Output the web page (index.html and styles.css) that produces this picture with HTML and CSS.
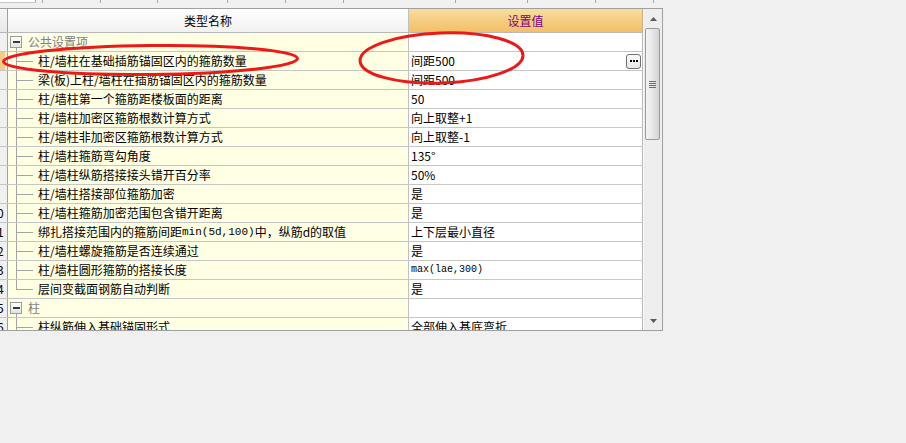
FILE: index.html
```html
<!DOCTYPE html>
<html lang="zh-CN">
<head>
<meta charset="utf-8">
<title>设置</title>
<link rel="stylesheet" href="styles.css">
</head>
<body>
<div class="ruler">
  <span class="tick tick-box" style="width:36px"></span>
  <span class="tick" style="width:7px"></span>
  <span class="tick" style="width:58px"></span>
  <span class="tick" style="width:57px"></span>
  <span class="tick" style="width:70px"></span>
  <span class="tick" style="width:58px"></span>
  <span class="tick" style="width:58px"></span>
  <span class="tick" style="width:112px"></span>
  <span class="tick" style="width:72px"></span>
  <span class="tick" style="width:68px"></span>
  <span class="tick" style="width:58px"></span>
</div>
<div class="grid">
  <div class="table">
    <div class="row hdr">
      <div class="rh"></div>
      <div class="nm">类型名称</div>
      <div class="val">设置值</div>
    </div>

    <div class="row">
      <div class="rh"></div>
      <div class="nm group"><span class="gtree"><span class="box"><span class="minus"></span></span><span class="gline"></span></span><span class="gtext">公共设置项</span></div>
      <div class="val"></div>
    </div>
    <div class="row">
      <div class="rh sel"></div>
      <div class="nm"><span class="tree"><span class="t-top"></span><span class="t-bot"></span></span>柱/墙柱在基础插筋锚固区内的箍筋数量</div>
      <div class="val"><span>间距500</span><span class="dots"><i></i><i></i><i></i></span></div>
    </div>
    <div class="row">
      <div class="rh"></div>
      <div class="nm"><span class="tree"><span class="t-top"></span><span class="t-bot"></span></span>梁(板)上柱/墙柱在插筋锚固区内的箍筋数量</div>
      <div class="val">间距500</div>
    </div>
    <div class="row">
      <div class="rh"></div>
      <div class="nm"><span class="tree"><span class="t-top"></span><span class="t-bot"></span></span>柱/墙柱第一个箍筋距楼板面的距离</div>
      <div class="val">50</div>
    </div>
    <div class="row">
      <div class="rh"></div>
      <div class="nm"><span class="tree"><span class="t-top"></span><span class="t-bot"></span></span>柱/墙柱加密区箍筋根数计算方式</div>
      <div class="val">向上取整+1</div>
    </div>
    <div class="row">
      <div class="rh"></div>
      <div class="nm"><span class="tree"><span class="t-top"></span><span class="t-bot"></span></span>柱/墙柱非加密区箍筋根数计算方式</div>
      <div class="val">向上取整-1</div>
    </div>
    <div class="row">
      <div class="rh"></div>
      <div class="nm"><span class="tree"><span class="t-top"></span><span class="t-bot"></span></span>柱/墙柱箍筋弯勾角度</div>
      <div class="val">135°</div>
    </div>
    <div class="row">
      <div class="rh"></div>
      <div class="nm"><span class="tree"><span class="t-top"></span><span class="t-bot"></span></span>柱/墙柱纵筋搭接接头错开百分率</div>
      <div class="val">50%</div>
    </div>
    <div class="row">
      <div class="rh"></div>
      <div class="nm"><span class="tree"><span class="t-top"></span><span class="t-bot"></span></span>柱/墙柱搭接部位箍筋加密</div>
      <div class="val">是</div>
    </div>
    <div class="row">
      <div class="rh"><span>10</span></div>
      <div class="nm"><span class="tree"><span class="t-top"></span><span class="t-bot"></span></span>柱/墙柱箍筋加密范围包含错开距离</div>
      <div class="val">是</div>
    </div>
    <div class="row">
      <div class="rh"><span>11</span></div>
      <div class="nm"><span class="tree"><span class="t-top"></span><span class="t-bot"></span></span>绑扎搭接范围内的箍筋间距<span class="mono">min(5d,100)</span>中，纵筋d的取值</div>
      <div class="val">上下层最小直径</div>
    </div>
    <div class="row">
      <div class="rh"><span>12</span></div>
      <div class="nm"><span class="tree"><span class="t-top"></span><span class="t-bot"></span></span>柱/墙柱螺旋箍筋是否连续通过</div>
      <div class="val">是</div>
    </div>
    <div class="row">
      <div class="rh"><span>13</span></div>
      <div class="nm"><span class="tree"><span class="t-top"></span><span class="t-bot"></span></span>柱/墙柱圆形箍筋的搭接长度</div>
      <div class="val"><span class="mono sm">max(lae,300)</span></div>
    </div>
    <div class="row">
      <div class="rh"><span>14</span></div>
      <div class="nm"><span class="tree"><span class="t-top"></span></span>层间变截面钢筋自动判断</div>
      <div class="val">是</div>
    </div>
    <div class="row">
      <div class="rh"><span>15</span></div>
      <div class="nm group"><span class="gtree"><span class="box"><span class="minus"></span></span><span class="gline"></span></span><span class="gtext">柱</span></div>
      <div class="val"></div>
    </div>
    <div class="row">
      <div class="rh"><span>16</span></div>
      <div class="nm"><span class="tree"><span class="t-top"></span><span class="t-bot"></span></span>柱纵筋伸入基础锚固形式</div>
      <div class="val">全部伸入基底弯折</div>
    </div>
  </div>
  <div class="vscroll">
    <div class="sb-btn"><svg width="7" height="4" viewBox="0 0 7 4"><polygon points="3.5,0 7,4 0,4" fill="#5a5a5a"/></svg></div>
    <div class="thumb"><span class="grip"></span><span class="grip"></span><span class="grip"></span><span class="grip"></span></div>
    <div class="track"></div>
    <div class="sb-btn"><svg width="7" height="4" viewBox="0 0 7 4"><polygon points="0,0 7,0 3.5,4" fill="#5a5a5a"/></svg></div>
  </div>
</div>
<svg class="marks" width="906" height="443" viewBox="0 0 906 443">
  <ellipse cx="150.5" cy="60" rx="147" ry="14.5" fill="none" stroke="#ec1a17" stroke-width="3" transform="rotate(-0.6 150 60)"/>
  <ellipse cx="441.5" cy="58" rx="81.5" ry="25" fill="none" stroke="#ec1a17" stroke-width="3" transform="rotate(-2 441 58)"/>
</svg>
</body>
</html>
```
FILE: styles.css
```css
* { box-sizing: border-box; }
html, body {
  margin: 0;
  padding: 0;
}
body {
  position: relative;
  width: 906px;
  height: 443px;
  background: #f0f0f0;
  font-family: "Noto Sans CJK SC", "Noto Sans", sans-serif;
  font-size: 12px;
  color: #000;
  overflow: hidden;
}
.ruler {
  display: flex;
  height: 8px;
  align-items: flex-start;
}
.tick {
  flex: none;
  height: 3px;
  border-right: 1px solid #a8a8a8;
}
.tick-box {
  height: 3px;
  background: #fff;
  border-bottom: 1px solid #c8c8c8;
}
.grid {
  display: flex;
  width: 663px;
  height: 323px;
  border-top: 1px solid #a0a0a0;
  border-right: 1px solid #a0a0a0;
  border-bottom: 1px solid #a0a0a0;
}
.table {
  width: 643px;
  flex: none;
  display: flex;
  flex-direction: column;
  overflow: hidden;
}
.row {
  flex: none;
  display: flex;
  height: 19px;
  line-height: 18px;
  border-bottom: 1px solid #c6c6c6;
}
.rh {
  flex: none;
  width: 8px;
  overflow: hidden;
  background: #f0f0f0;
  border-right: 1px solid #a0a0a0;
  white-space: nowrap;
}
.rh span {
  display: block;
  width: 20px;
  margin-left: -13px;
  text-align: center;
}
.rh.sel {
  background: linear-gradient(to right, #f8ca88 5px, #f0f0f0 5px);
}
.nm {
  flex: none;
  width: 401px;
  display: flex;
  align-items: stretch;
  white-space: nowrap;
  overflow: hidden;
  background: #ffffe3;
  border-right: 1px solid #c0c0c0;
}
.val {
  flex: none;
  width: 234px;
  display: flex;
  justify-content: space-between;
  align-items: center;
  padding-left: 2px;
  white-space: nowrap;
  overflow: hidden;
  background: #fff;
  border-right: 1px solid #b8b8b8;
}
.hdr {
  height: 24px;
  line-height: 23px;
  border-bottom: 1px solid #b8b8b8;
}
.hdr .rh {
  background: linear-gradient(#f6f6f6, #e8e8e8);
}
.hdr .nm {
  justify-content: center;
  background: linear-gradient(#ffffff, #f8f8f8 50%, #f2f2f2);
}
.hdr .val {
  justify-content: center;
  padding-left: 0;
  color: #800080;
  background: linear-gradient(#fadca2, #f6cd80 50%, #f3c066);
  border-right-color: #c8b080;
}
/* tree */
.tree {
  flex: none;
  display: flex;
  flex-direction: column;
  width: 17px;
  margin-left: 8px;
  margin-right: 5px;
}
.t-top {
  flex: none;
  height: 10px;
  border-left: 1px solid #a4a4a4;
  border-bottom: 1px solid #a4a4a4;
}
.t-bot {
  flex: 1;
  margin-bottom: -1px;
  border-left: 1px solid #a4a4a4;
}
.gtree {
  flex: none;
  display: flex;
  flex-direction: column;
  align-items: flex-start;
  margin-left: 2px;
  margin-right: 6px;
  padding-top: 3px;
}
.box {
  width: 12px;
  height: 12px;
  display: flex;
  align-items: center;
  justify-content: center;
  border: 1px solid #9c9c9c;
  background: linear-gradient(#ffffff, #e2e2e2);
}
.minus {
  width: 7px;
  height: 2px;
  background: #3a3a3a;
}
.gline {
  flex: 1;
  width: 1px;
  margin-left: 6px;
  margin-bottom: -1px;
  background: #a4a4a4;
}
.gtext {
  color: #808080;
}
.mono {
  font-family: "Liberation Mono", monospace;
  font-size: 11px;
}
.mono.sm {
  font-size: 10px;
}
.dots {
  flex: none;
  width: 15px;
  height: 15px;
  margin-right: 1px;
  display: flex;
  align-items: center;
  justify-content: center;
  gap: 1px;
  border: 1px solid #707070;
  border-radius: 3px;
  background: linear-gradient(#fbfbfb, #e6e6e6);
}
.dots i {
  width: 2px;
  height: 2px;
  background: #000;
}
/* scrollbar */
.vscroll {
  flex: 1;
  display: flex;
  flex-direction: column;
  background: #eeeeee;
  border-left: 1px solid #f8f8f8;
}
.sb-btn {
  flex: none;
  height: 19px;
  display: flex;
  align-items: center;
  justify-content: center;
}
.thumb {
  flex: none;
  height: 112px;
  margin: 0 2px 0 1px;
  display: flex;
  flex-direction: column;
  align-items: center;
  justify-content: center;
  gap: 1px;
  border: 1px solid #9a9a9a;
  border-radius: 2px;
  background: linear-gradient(to right, #f5f5f5, #e8e8e8 45%, #d4d4d4);
}
.grip {
  width: 7px;
  height: 1px;
  background: #6e6e6e;
}
.track {
  flex: 1;
}
.marks {
  position: absolute;
  left: 0;
  top: 0;
  pointer-events: none;
}
```
